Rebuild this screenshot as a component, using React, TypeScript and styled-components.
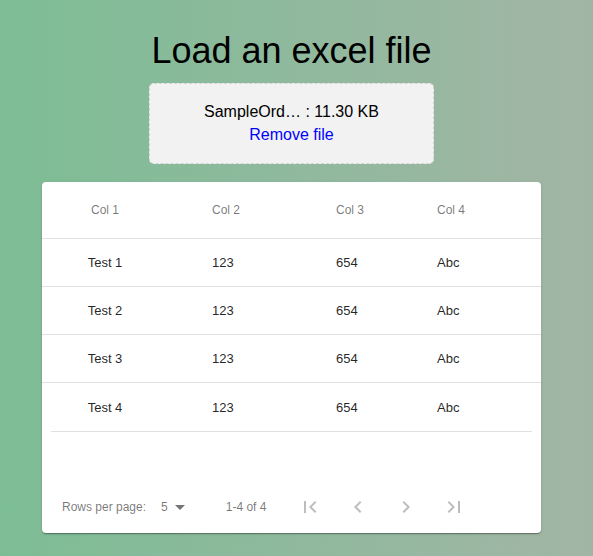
import { createGlobalStyle } from "styled-components";
import styled from "styled-components";

const GlobalStyle = createGlobalStyle`
  html, body {
    margin: 0;
    padding: 0;
  }
  body {
    min-height: 100vh;
    background: linear-gradient(90deg, #7dbd95 0%, #a2b5a5 100%);
    font-family: "Liberation Sans", Arial, sans-serif;
  }
`;

const ROWS = [
  { name: "Test 1", a: "123", b: "654", c: "Abc" },
  { name: "Test 2", a: "123", b: "654", c: "Abc" },
  { name: "Test 3", a: "123", b: "654", c: "Abc" },
  { name: "Test 4", a: "123", b: "654", c: "Abc" },
];

const App = () => {
  return (
    <>
      <GlobalStyle />
      <Page>
        <Title>Load an excel file</Title>
        <DropZone>
          <FileName>SampleOrd… : 11.30 KB</FileName>
          <RemoveLink>Remove file</RemoveLink>
        </DropZone>
        <Card>
          <HeadRow>
            <Cell first>Col 1</Cell>
            <Cell>Col 2</Cell>
            <Cell>Col 3</Cell>
            <Cell>Col 4</Cell>
          </HeadRow>
          {ROWS.map((row, i) => (
            <BodyRow key={row.name} last={i === ROWS.length - 1}>
              <Cell first>{row.name}</Cell>
              <Cell>{row.a}</Cell>
              <Cell>{row.b}</Cell>
              <Cell>{row.c}</Cell>
            </BodyRow>
          ))}
          <BodyEnd />
          <Spacer />
          <Footer>
            <Caption>Rows per page:</Caption>
            <PageSelect>
              <span>5</span>
              <svg width="24" height="24" viewBox="0 0 24 24">
                <path d="M7 10l5 5 5-5z" fill="rgba(0,0,0,0.54)" />
              </svg>
            </PageSelect>
            <Range>1-4 of 4</Range>
            <Actions>
              <IconButton disabled>
                <svg width="24" height="24" viewBox="0 0 24 24">
                  <path d="M18.41 16.59L13.82 12l4.59-4.59L17 6l-6 6 6 6zM6 6h2v12H6z" />
                </svg>
              </IconButton>
              <IconButton disabled>
                <svg width="24" height="24" viewBox="0 0 24 24">
                  <path d="M15.41 7.41L14 6l-6 6 6 6 1.41-1.41L10.83 12z" />
                </svg>
              </IconButton>
              <IconButton disabled>
                <svg width="24" height="24" viewBox="0 0 24 24">
                  <path d="M10 6L8.59 7.41 13.17 12l-4.58 4.59L10 18l6-6z" />
                </svg>
              </IconButton>
              <IconButton disabled>
                <svg width="24" height="24" viewBox="0 0 24 24">
                  <path d="M5.59 7.41L10.18 12l-4.59 4.59L7 18l6-6-6-6zM16 6h2v12h-2z" />
                </svg>
              </IconButton>
            </Actions>
          </Footer>
        </Card>
      </Page>
    </>
  );
};

const Page = styled.div`
  width: 583px;
  padding-top: 30px;
  display: flex;
  flex-direction: column;
  align-items: center;
`;
const Title = styled.h1`
  margin: 0;
  font-size: 36px;
  font-weight: 400;
  line-height: 41px;
  color: #000;
`;
const DropZone = styled.div`
  box-sizing: border-box;
  margin-top: 12px;
  width: 285px;
  height: 81px;
  padding: 16px 16px 14px;
  border: 1.5px dashed #d4d4d4;
  border-radius: 5px;
  background: #f2f2f2;
  display: flex;
  flex-direction: column;
  align-items: center;
  font-size: 16px;
  line-height: 23px;
`;
const FileName = styled.div`
  color: #000;
`;
const RemoveLink = styled.div`
  color: #0000ff;
  cursor: pointer;
`;
const Card = styled.div`
  margin-top: 18px;
  width: 499px;
  background: #fff;
  border-radius: 4px;
  box-shadow: 0px 2px 1px -1px rgba(0, 0, 0, 0.2),
    0px 1px 1px 0px rgba(0, 0, 0, 0.14), 0px 1px 3px 0px rgba(0, 0, 0, 0.12);
`;
const HeadRow = styled.div`
  display: grid;
  grid-template-columns: 126px 124px 101px 1fr;
  align-items: center;
  height: 56px;
  border-bottom: 1px solid #e0e0e0;
  font-size: 12px;
  color: rgba(0, 0, 0, 0.54);
`;
const BodyRow = styled.div<{ last?: boolean }>`
  display: grid;
  grid-template-columns: 126px 124px 101px 1fr;
  align-items: center;
  height: ${(p) => (p.last ? "48px" : "47px")};
  border-bottom: ${(p) => (p.last ? "none" : "1px solid #e0e0e0")};
  font-size: 13px;
  color: rgba(0, 0, 0, 0.87);
`;
const Cell = styled.div<{ first?: boolean }>`
  text-align: ${(p) => (p.first ? "center" : "left")};
  padding-left: ${(p) => (p.first ? "0" : "44px")};
`;
const BodyEnd = styled.div`
  margin: 0 9px;
  border-top: 1px solid #e0e0e0;
`;
const Spacer = styled.div`
  height: 49px;
`;
const Footer = styled.div`
  display: flex;
  align-items: center;
  height: 52px;
  padding-left: 20px;
  font-size: 12px;
  color: rgba(0, 0, 0, 0.54);
`;
const Caption = styled.span`
  white-space: nowrap;
`;
const PageSelect = styled.div`
  display: flex;
  align-items: center;
  margin-left: 15px;
  svg {
    display: block;
  }
`;
const Range = styled.span`
  margin-left: 34px;
`;
const Actions = styled.div`
  display: flex;
  margin-left: 20px;
`;
const IconButton = styled.button`
  width: 48px;
  height: 48px;
  padding: 12px;
  border: none;
  background: transparent;
  display: flex;
  align-items: center;
  justify-content: center;
  svg {
    fill: rgba(0, 0, 0, 0.26);
    display: block;
  }
`;

export default App;
